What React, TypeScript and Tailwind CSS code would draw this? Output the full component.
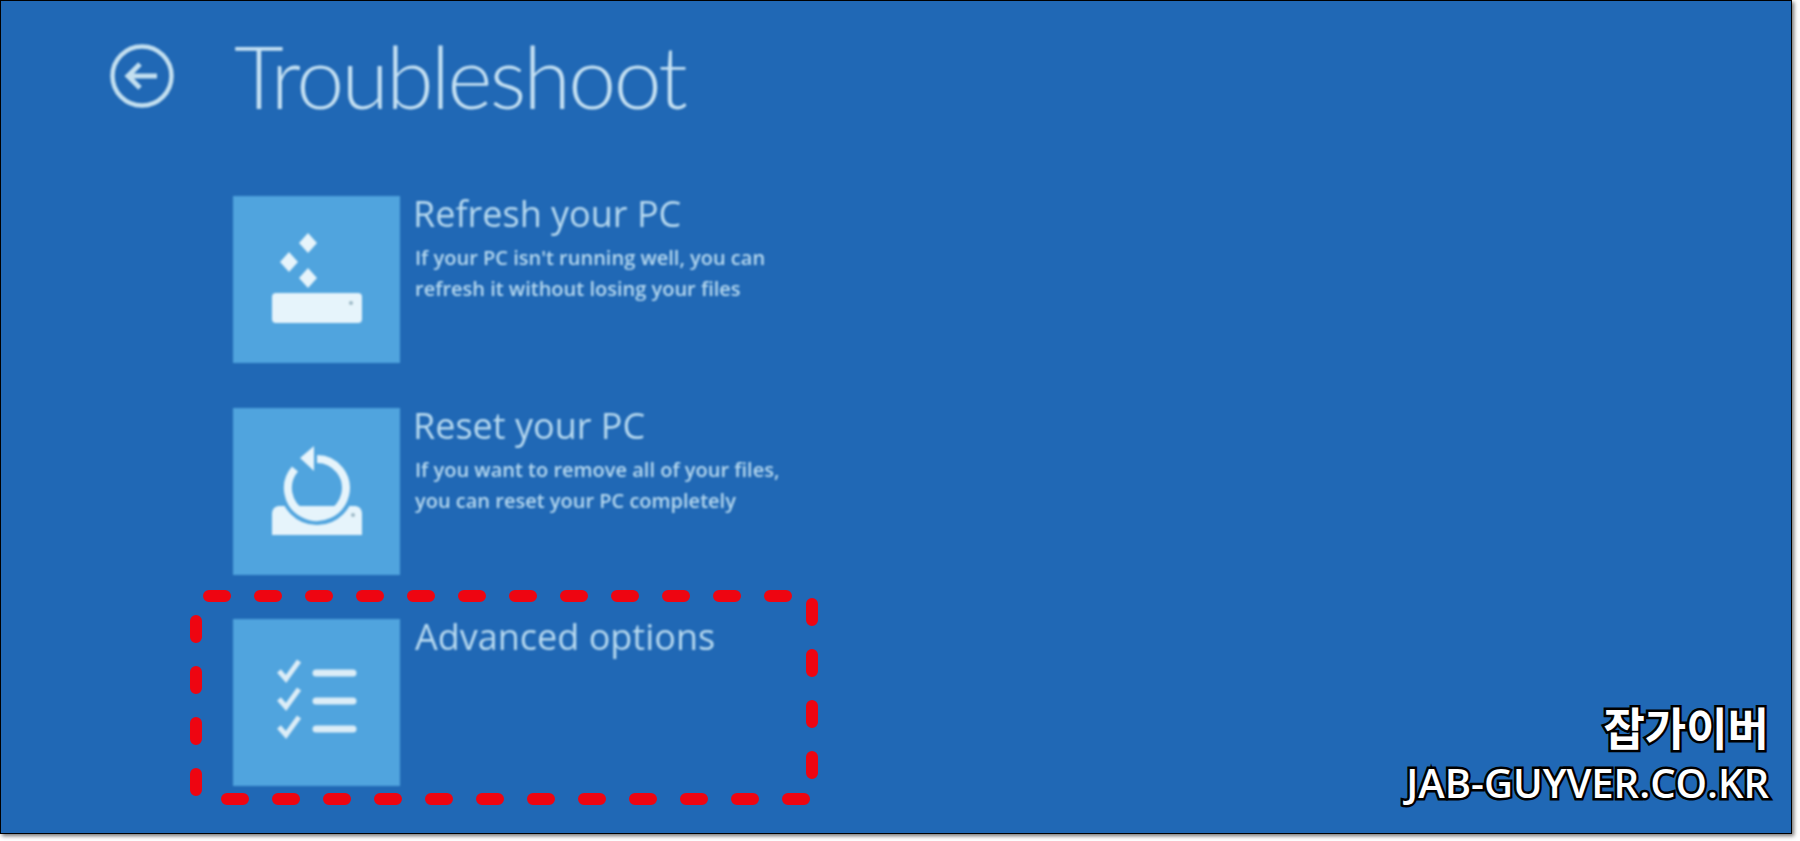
import React from 'react';

const TILE_FILL = '#50a4de';
const ICON_FILL = '#e6f4fb';

const BackIcon = () => (
  <svg width="70" height="70" viewBox="0 0 70 70" fill="none" stroke="#c4e0f0" strokeWidth="4.5">
    <circle cx="35" cy="35" r="29.5" />
    <path d="M50 35H21M33 23L21 35l12 12" strokeWidth="5" />
  </svg>
);

const RefreshIcon = () => (
  <svg width="167" height="167" viewBox="0 0 167 167" fill={ICON_FILL}>
    <path d="M75 37l9 10-9 10-9-10z" />
    <path d="M56 56l9 10-9 10-9-10z" />
    <path d="M75 72l9 10-9 10-9-10z" />
    <rect x="39" y="97" width="90" height="30" rx="4" />
    <circle cx="118" cy="107" r="2" fill="#9bb7c4" />
  </svg>
);

const ResetIcon = () => (
  <svg width="167" height="167" viewBox="0 0 167 167" fill={ICON_FILL}>
    <path d="M39 106c0-5 3-8 8-8h74c5 0 8 3 8 8v21H39z" />
    <circle cx="120" cy="107" r="2" fill="#9bb7c4" />
    <circle cx="84" cy="80" r="34" fill="none" stroke={TILE_FILL} strokeWidth="6" />
    <path d="M84 51a29 29 0 1 1-22 10" fill="none" stroke={ICON_FILL} strokeWidth="8" />
    <path d="M81 38v25L67 50z" />
  </svg>
);

const OptionsIcon = () => (
  <svg width="167" height="167" viewBox="0 0 167 167" fill="none" stroke="#dcedf7">
    {[0, 28, 56].map((dy) => (
      <g key={dy} transform={`translate(0 ${dy})`}>
        <path d="M46 52l7 8 13-18" strokeWidth="5" />
        <path d="M83 54h37" strokeWidth="7" strokeLinecap="round" />
      </g>
    ))}
  </svg>
);

const options = [
  {
    title: 'Refresh your PC',
    titleClass: '',
    lines: ["If your PC isn't running well, you can", 'refresh it without losing your files'],
    icon: <RefreshIcon />,
  },
  {
    title: 'Reset your PC',
    titleClass: '',
    lines: ['If you want to remove all of your files,', 'you can reset your PC completely'],
    icon: <ResetIcon />,
  },
  {
    title: 'Advanced options',
    titleClass: 'ml-[2px]',
    lines: [],
    icon: <OptionsIcon />,
  },
];

const App: React.FC = () => {
  return (
    <div className="w-[1800px] h-[841px] bg-white overflow-hidden">
      <div className="relative w-[1792px] h-[834px] bg-[#2068b5] border border-black shadow-[2px_2px_4px_rgba(0,0,0,0.55)] overflow-hidden">
        <div className="blur-[0.9px]">
          {/* Header */}
          <div className="flex items-center h-[153px] pl-[106px] pb-[3px]">
            <BackIcon />
            <h1 className="ml-[57px] text-[86px] leading-none font-light tracking-[-2.6px] text-[#c4e0f2] font-['Lato','Open_Sans',sans-serif]">
              Troubleshoot
            </h1>
          </div>

          {/* Options */}
          <div className="flex flex-col gap-[44.5px] pt-[42px] pl-[232px]">
            {options.map((option) => (
              <div key={option.title} className="flex gap-[13px]">
                <div className="w-[167px] h-[167px] shrink-0 bg-[#50a4de]">{option.icon}</div>
                <div className="font-['Open_Sans',sans-serif] text-[#b8daf0] -mt-[2px]">
                  <div className={`text-[36px] leading-[40px] font-normal ${option.titleClass}`}>{option.title}</div>
                  <div className="mt-[8px] ml-[2px] text-[20px] leading-[31px] font-semibold">
                    {option.lines.map((line) => (
                      <div key={line}>{line}</div>
                    ))}
                  </div>
                </div>
              </div>
            ))}
          </div>
        </div>

        {/* Red dashed annotation */}
        <svg
          className="absolute left-0 top-0 blur-[0.4px]"
          width="1790"
          height="832"
          viewBox="1 1 1790 832"
          fill="none"
          stroke="#ee0511"
          strokeWidth="12"
          strokeLinecap="round"
          strokeDasharray="16 35"
        >
          <path d="M209 596H790" />
          <path d="M227 799H808" />
          <path d="M196 621V792" />
          <path d="M812 604V777" />
        </svg>

        {/* Watermark */}
        <div className="absolute right-[22px] top-[696px] flex flex-col items-end text-white font-semibold [-webkit-text-stroke:5px_#000] [paint-order:stroke_fill] font-['Open_Sans','Noto_Sans_CJK_KR',sans-serif]">
          <div className="text-[45px] leading-[60px] font-['Noto_Sans_CJK_KR',sans-serif] font-bold">잡가이버</div>
          <div className="text-[40px] leading-[52px]">JAB-GUYVER.CO.KR</div>
        </div>
      </div>
    </div>
  );
};

export default App;
